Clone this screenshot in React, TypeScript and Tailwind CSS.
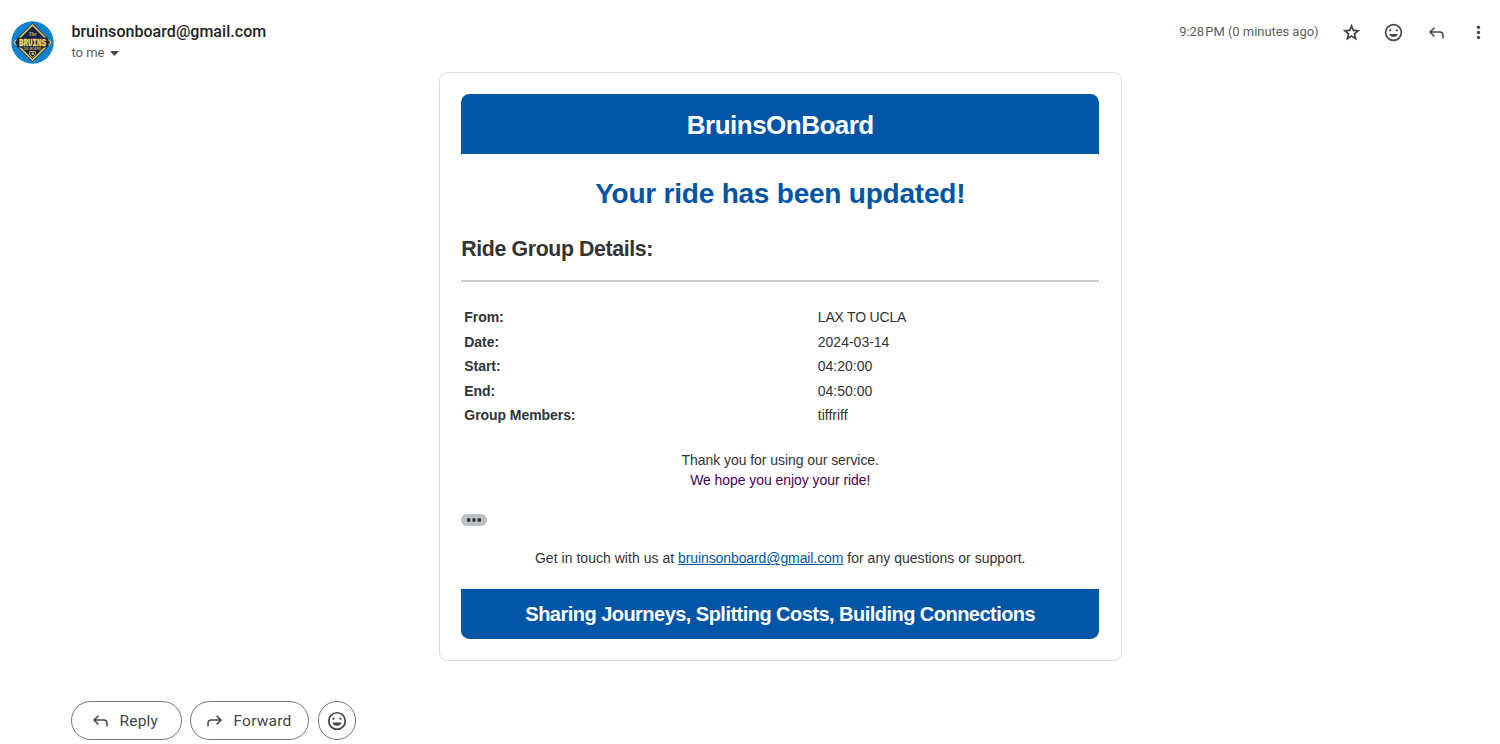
import type { ReactNode } from "react";

const STAR =
  "m354-287 126-76 126 77-33-144 111-96-146-13-58-136-58 135-146 13 111 97-33 143ZM233-120l65-281L80-590l288-25 112-265 112 265 288 25-218 189 65 281-247-149-247 149Z";

function Star({ className }: { className: string }) {
  return (
    <svg viewBox="0 -960 960 960" className={className} fill="currentColor">
      <path d={STAR} />
    </svg>
  );
}

function ReplyArrow({ className }: { className: string }) {
  return (
    <svg viewBox="0 0 21 21" className={className} fill="none" stroke="currentColor" strokeWidth="1.5">
      <path d="M8.400 5.700 4 10.100l4.400 4.400M4 10.100H13.700q3.300 0 3.300 3.300V16.500" />
    </svg>
  );
}

function Smile({ className }: { className: string }) {
  return (
    <svg viewBox="0 0 24 24" className={className} fill="currentColor">
      <circle cx="12" cy="12" r="9" fill="none" stroke="currentColor" strokeWidth="1.9" />
      <circle cx="8.200" cy="9.500" r="1.250" />
      <circle cx="15.800" cy="9.500" r="1.250" />
      <path d="M7 13.700h10C16.200 16 14.400 17.200 12 17.200S7.800 16 7 13.700Z" />
    </svg>
  );
}

function Avatar() {
  return (
    <svg viewBox="0 0 43 43" className="h-[43px] w-[43px] shrink-0">
      <circle cx="21.500" cy="21.500" r="21.200" fill="#0b82d2" />
      <g fill="none" stroke="#3d93c4" strokeWidth=".6">
        <path d="M4 12l7-7M32 5l7 7M4 31l7 7M39 31l-7 7" />
      </g>
      <path d="M21.500 1.800 41.200 21.500 21.500 41.200 1.800 21.500Z" fill="#3a3530" />
      <path d="M21.500 4 39 21.500 21.500 39 4 21.500Z" fill="#13234a" stroke="#dfbd55" strokeWidth="1.700" />
      <path d="M7 16.500h29l3 5-3 5H7l-3-5Z" fill="#13234a" />
      <path d="M5.500 18.500 2.800 21.500l2.700 3M37.500 18.500l2.700 3-2.700 3" fill="none" stroke="#dfbd55" strokeWidth="1.100" />
      <text x="21.500" y="15.300" textAnchor="middle" fontSize="7" fontStyle="italic" fontWeight="700" textLength="8" lengthAdjust="spacingAndGlyphs" fontFamily="Liberation Serif, serif" fill="#d9b44a">
        The
      </text>
      <text x="21.500" y="24.800" textAnchor="middle" fontSize="10" fontWeight="700" textLength="27" lengthAdjust="spacingAndGlyphs" fontFamily="Liberation Mono, monospace" fill="#f6d35f" stroke="#f6d35f" strokeWidth=".4">
        BRUINS
      </text>
      <text x="21.500" y="29" textAnchor="middle" fontSize="4" fontWeight="700" textLength="18" lengthAdjust="spacingAndGlyphs" fontFamily="Liberation Sans, sans-serif" fill="#c3a44c">
        ON BOARD
      </text>
      <path d="M18.700 30.500h5.600v3.300l-2.800 2.500-2.800-2.500Z" fill="#13234a" stroke="#dfbd55" strokeWidth=".9" />
      <path d="M20.700 31.500h2v2.500h-2z" fill="#dfbd55" />
    </svg>
  );
}

function Row({ label, children }: { label: string; children: ReactNode }) {
  return (
    <div className="flex h-[24.5px] items-center">
      <dt className="w-[353.500px] font-bold tracking-[-0.060px]">{label}</dt>
      <dd>{children}</dd>
    </div>
  );
}

export default function App() {
  return (
    <main className="flex h-[744px] w-[1500px] flex-col overflow-hidden bg-white font-['Liberation_Sans',Arial,sans-serif] text-[#333]">
      <header className="flex h-[72px] items-start pl-[11.400px] pr-[11px] font-['Roboto',sans-serif]">
        <div className="pt-[21px]">
          <Avatar />
        </div>
        <div className="ml-[17px] pt-[21px]">
          <div className="text-[16px] font-medium leading-[22px] tracking-[0.040px] text-[#1f1f1f]">
            <span>bruinsonboard@gmail.com</span>
          </div>
          <div className="flex items-center text-[13px] leading-5 text-[#5e5e5e]">
            <span>to me</span>
            <svg viewBox="0 0 9 5" className="ml-[6px] mt-px h-[5px] w-[9px]" fill="#444">
              <path d="M0 0h9L4.500 5Z" />
            </svg>
          </div>
        </div>
        <div className="ml-auto flex h-16 items-center text-[#444746]">
          <span className="mr-[22px] text-[13px] tracking-[-0.050px] text-[#5e5e5e]">9:28&#8202;PM (0 minutes ago)</span>
          <Star className="mr-[21.500px] h-[21px] w-[21px]" />
          <Smile className="mr-[21.500px] h-[21px] w-[21px]" />
          <ReplyArrow className="mr-[21.500px] h-[21px] w-[21px]" />
          <svg viewBox="0 0 21 21" className="h-[21px] w-[21px]" fill="currentColor">
            <circle cx="10.500" cy="5.300" r="1.700" />
            <circle cx="10.500" cy="10.400" r="1.700" />
            <circle cx="10.500" cy="15.500" r="1.700" />
          </svg>
        </div>
      </header>

      <article className="ml-[439px] flex h-[589px] w-[682.500px] shrink-0 flex-col rounded-[8.500px] border border-[#ddd] px-[21.300px] pt-[21.400px] text-[14px]">
        <h1 className="flex h-[59.600px] shrink-0 items-center justify-center rounded-t-[8.500px] bg-[#0055a6] pt-[2px] text-[26px] font-bold tracking-[-0.520px] text-white">
          <span>BruinsOnBoard</span>
        </h1>
        <h2 className="mt-[22px] text-center text-[28px] font-bold leading-9 tracking-[-0.220px] text-[#0055a6]">
          <span>Your ride has been updated!</span>
        </h2>
        <h3 className="mt-[23px] text-[21.300px] font-bold leading-7 tracking-[-0.370px]">
          <span>Ride Group Details:</span>
        </h3>
        <hr className="mt-[17px] border-t-2 border-[#ccc]" />
        <dl className="ml-[3px] mt-[23.300px]">
          <Row label="From:">
            <span className="tracking-[-0.200px]">LAX TO UCLA</span>
          </Row>
          <Row label="Date:">2024-03-14</Row>
          <Row label="Start:">04:20:00</Row>
          <Row label="End:">04:50:00</Row>
          <Row label="Group Members:">tiffriff</Row>
        </dl>
        <p className="mt-[22.500px] text-center leading-5 tracking-[-0.060px]">
          <span>Thank you for using our service.</span>
          <br />
          <span className="text-[#500050]">We hope you enjoy your ride!</span>
        </p>
        <div className="mt-[24px] flex h-[12px] w-[26px] shrink-0 items-center justify-center rounded-full bg-[#bdc1c6]">
          <svg viewBox="0 0 16 4" className="h-[4px] w-[16px]" fill="#333">
            <circle cx="2.700" cy="2" r="1.900" />
            <circle cx="8" cy="2" r="1.900" />
            <circle cx="13.300" cy="2" r="1.900" />
          </svg>
        </div>
        <p className="mt-[22px] text-center leading-5 tracking-[0.030px]">
          <span>
            Get in touch with us at <a className="tracking-[-0.100px] text-[#0055a6] underline">bruinsonboard@gmail.com</a> for any questions or support.
          </span>
        </p>
        <div className="mt-[21px] flex h-[50px] shrink-0 items-center justify-center rounded-b-[8.500px] bg-[#0055a6] text-[20px] font-bold tracking-[-0.530px] text-white">
          <span>Sharing Journeys, Splitting Costs, Building Connections</span>
        </div>
      </article>

      <footer className="mt-[40.400px] flex gap-[8.500px] pl-[71px] font-['Roboto',sans-serif] text-[15.500px] tracking-[0.200px] text-[#444746]">
        <button className="flex h-[38.500px] w-[110.500px] items-center rounded-full border border-[#747775] pl-[18px]">
          <ReplyArrow className="mr-[8.500px] h-[21px] w-[21px]" />
          <span className="pt-[1.500px]">Reply</span>
        </button>
        <button className="flex h-[38.500px] w-[119px] items-center rounded-full border border-[#747775] pl-[13px]">
          <ReplyArrow className="mr-[8.500px] h-[21px] w-[21px] -scale-x-100" />
          <span className="pt-[1.500px]">Forward</span>
        </button>
        <button className="flex h-[38.500px] w-[38.500px] items-center justify-center rounded-full border border-[#747775]">
          <Smile className="h-[22px] w-[22px]" />
        </button>
      </footer>
    </main>
  );
}
